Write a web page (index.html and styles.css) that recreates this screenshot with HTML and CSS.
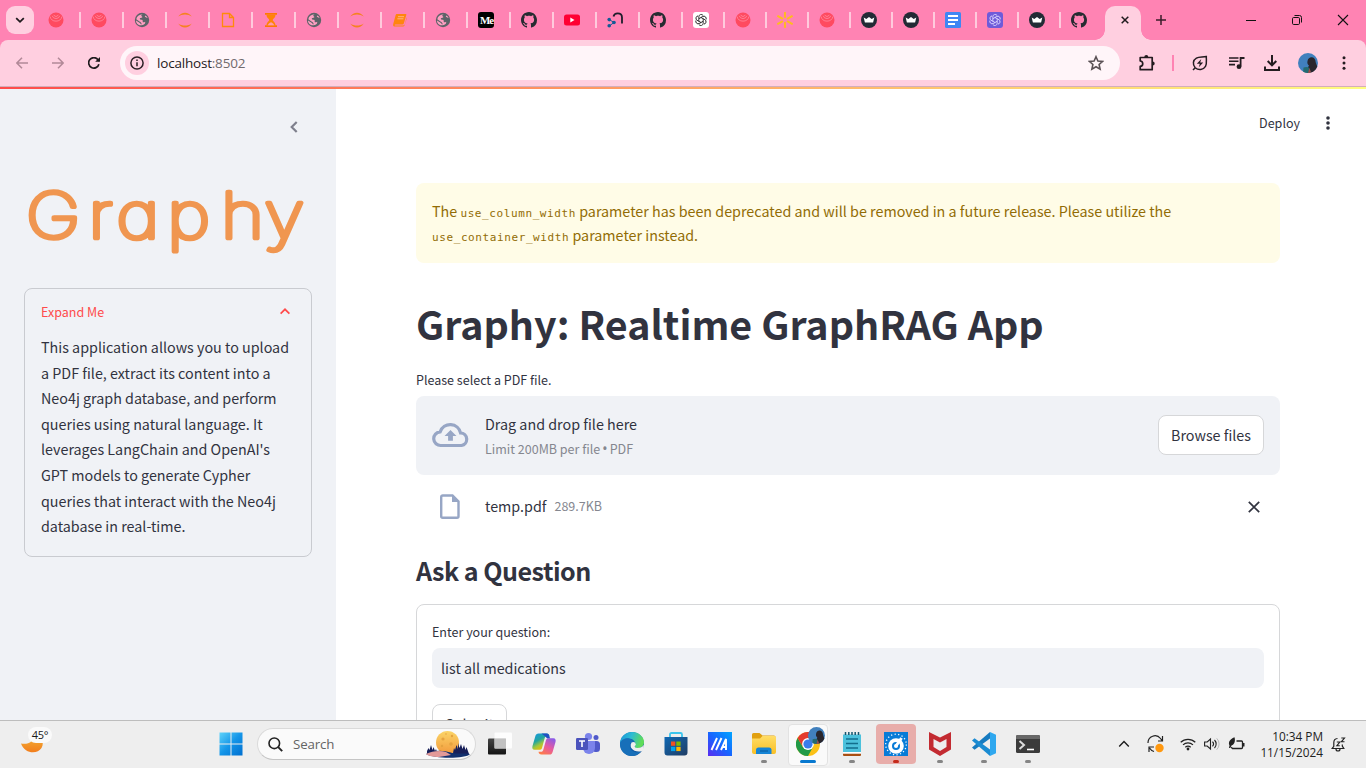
FILE: index.html
```html
<!DOCTYPE html>
<html lang="en">
<head>
<meta charset="utf-8">
<title>Graphy</title>
<link rel="stylesheet" href="styles.css">
</head>
<body>
<svg class="defs" width="0" height="0" aria-hidden="true">
  <defs>
    <linearGradient id="win" x1="0" y1="0" x2="1" y2="1"><stop offset="0" stop-color="#5fd3fa"/><stop offset=".5" stop-color="#1495e8"/><stop offset="1" stop-color="#006fd0"/></linearGradient>
    <linearGradient id="moon" x1="0" y1="0" x2="0" y2="1"><stop offset="0" stop-color="#f2b63a"/><stop offset="1" stop-color="#f27d1c"/></linearGradient>
    <linearGradient id="fullmoon" x1="0" y1="0" x2="0" y2="1"><stop offset="0" stop-color="#fbd467"/><stop offset="1" stop-color="#f29a3c"/></linearGradient>
    <linearGradient id="copA" x1="0" y1="0" x2=".6" y2="1"><stop offset="0" stop-color="#1597e8"/><stop offset=".45" stop-color="#22a5a0"/><stop offset=".7" stop-color="#a3c83a"/><stop offset="1" stop-color="#ffb800"/></linearGradient>
    <linearGradient id="copB" x1=".8" y1="0" x2=".2" y2="1"><stop offset="0" stop-color="#8a5be8"/><stop offset=".5" stop-color="#e65aa0"/><stop offset="1" stop-color="#ff7d45"/></linearGradient>
    <linearGradient id="edgeA" x1="0" y1="0" x2="1" y2=".3"><stop offset="0" stop-color="#1793d8"/><stop offset=".5" stop-color="#2dbbd4"/><stop offset="1" stop-color="#5fdc58"/></linearGradient>
    <linearGradient id="edgeB" x1="0" y1="0" x2="1" y2="1"><stop offset="0" stop-color="#1677c8"/><stop offset="1" stop-color="#0b4f96"/></linearGradient>
    <linearGradient id="asus" x1="0" y1="1" x2="1" y2="0"><stop offset="0" stop-color="#5a2cf0"/><stop offset=".5" stop-color="#1766ff"/><stop offset="1" stop-color="#00a5ff"/></linearGradient>
    <linearGradient id="store" x1="0" y1="0" x2="1" y2="1"><stop offset="0" stop-color="#0f68b4"/><stop offset="1" stop-color="#203d63"/></linearGradient>
    <linearGradient id="folder" x1="0" y1="0" x2="0" y2="1"><stop offset="0" stop-color="#ffdd67"/><stop offset="1" stop-color="#f9bf25"/></linearGradient>
    <linearGradient id="paneA" x1="0" y1="0" x2="0" y2="1"><stop offset="0" stop-color="#454545"/><stop offset="1" stop-color="#141414"/></linearGradient>
    <symbol id="swirl" viewBox="0 0 16 16"><circle cx="8" cy="8" r="7.5" fill="#ff4a60"/><g fill="none" stroke="#ff8ba2" stroke-width=".8"><path d="M2 4.500a6.200 6.200 0 0 0 12 0M4.200 3.800a4 4 0 0 0 7.600 0M5.800 2.800a2.300 2.300 0 0 0 4.400 0"/></g></symbol>
    <symbol id="globe" viewBox="0 0 16 16"><circle cx="8" cy="8" r="7.2" fill="#5d6368"/><path d="M9 2.300c-2 .6-2.200 1.700-1 2.200 1 .4-.2 1.500-1.400 1.600-1.400.1-.8 1.700.5 1.700 1.500 0 1.700.4 1.600 1.700-.1 1.400 1.400.8 2.400.2.6 1.600-.6 2.700-2.400 3.300C5.500 14.300 2 12 2 8.600l3.500 2.100c1 .5 1 1.500 2 1.800.6-1.300-.8-2.600-2-3.100L2.300 7.200C2.700 4.300 5 2.400 9 2.300zM11.500 3.500c-.9.500-.8 1.300-.1 1.600.8.300 1.200.9 2.200.8-.4-1-1.200-1.900-2.100-2.400z" fill="#ff9fc2"/></symbol>
    <symbol id="ring" viewBox="0 0 16 16"><path d="M1.200 4.600C4.500-.7 11.500-.7 14.800 4.600 11 1.900 5 1.900 1.200 4.600zM1.200 11.400C4.500 16.700 11.500 16.700 14.800 11.400 11 14.100 5 14.100 1.200 11.400z" fill="#f58220"/></symbol>
    <symbol id="page" viewBox="0 0 16 16"><path d="M2.500 1.500h7l4 4v9h-11zM9.500 1.500v4h4" fill="none" stroke="#ff8a0a" stroke-width="1.300"/></symbol>
    <symbol id="glass" viewBox="0 0 16 16"><path d="M2 1h12v1.700H2zM2 13.300h12V15H2z" fill="#ff7a00"/><path d="M3.500 2.700h9c0 3-2.500 4-2.800 5.300.3 1.300 2.800 2.300 2.800 5.300h-9C3.500 10.300 6 9.300 6.300 8 6 6.700 3.500 5.700 3.500 2.700z" fill="#ff8408"/><path d="M5 13.300c.3-2 1.500-2 3-3 1.500 1 2.700 1 3 3" fill="#ff9cae"/></symbol>
    <symbol id="book" viewBox="0 0 16 16"><path d="M5 2h8.600c.7 0 .9.400.7 1l-2.500 8.600c-.2.700-.6 1-1.300 1H3.400c-.9 0-1.100.8-.2.800h8c1 0 1.400-.4 1.700-1.300L14.800 5v1.500l-2.300 7c-.2.700-.7 1.100-1.500 1.100H3c-1.700 0-2.300-1.300-1.700-2.900L3.600 3.200C3.800 2.500 4.200 2 5 2z" fill="#ff850f"/><path d="M6 4.700h6M5.400 6.800h6" stroke="#ffb98f" stroke-width=".9"/></symbol>
    <symbol id="gh" viewBox="0 0 16 16"><path fill="#262b31" d="M8 0C3.580 0 0 3.580 0 8c0 3.540 2.290 6.530 5.470 7.590.4.070.550-.170.550-.380 0-.190-.010-.820-.010-1.490-2.010.370-2.530-.490-2.690-.940-.090-.230-.480-.940-.820-1.130-.280-.150-.680-.520-.010-.530.630-.010 1.080.580 1.230.820.720 1.210 1.870.870 2.330.660.070-.520.280-.870.510-1.070-1.780-.2-3.640-.890-3.640-3.950 0-.870.310-1.590.820-2.150-.080-.2-.360-1.020.080-2.120 0 0 .670-.210 2.200.820.640-.180 1.320-.270 2-.270s1.360.090 2 .270c1.530-1.040 2.200-.820 2.200-.820.440 1.100.160 1.920.080 2.120.510.560.820 1.270.820 2.150 0 3.070-1.870 3.750-3.650 3.950.290.250.540.730.540 1.480 0 1.070-.010 1.930-.010 2.200 0 .210.150.460.550.380A8.010 8.010 0 0 0 16 8c0-4.420-3.580-8-8-8z"/></symbol>
    <path id="petal" d="M5.500 9.400V4.300a2.700 2.700 0 0 1 4.900-1.500" fill="none" stroke="currentColor" stroke-width="1"/>
    <symbol id="knot" viewBox="0 0 16 16"><use href="#petal"/><use href="#petal" transform="rotate(60 8 8)"/><use href="#petal" transform="rotate(120 8 8)"/><use href="#petal" transform="rotate(180 8 8)"/><use href="#petal" transform="rotate(240 8 8)"/><use href="#petal" transform="rotate(300 8 8)"/></symbol>
    <symbol id="crown" viewBox="0 0 16 16"><circle cx="8" cy="8" r="8" fill="#232a35"/><path d="M2.700 5.600 5.300 7 8 5 10.700 7l2.600-1.400-1.200 4.800H3.900z" fill="#fff"/></symbol>
    <symbol id="avatar" viewBox="0 0 20 20"><circle cx="10" cy="10" r="10" fill="#4180bd"/><path d="M9.500 8c.5-3 2.500-4 4.500-3.800 2.400.3 3.700 2.400 3.700 5l1.500 4.200a10 10 0 0 1-6.200 6.100L9 16l2-3.500c-1.300-1-2-2.500-1.500-4.500z" fill="#29262d"/><path d="M5.500 14.500c2-.8 3.500-.8 5.500 0l2 5a10 10 0 0 1-7.800-.8z" fill="#246a70"/><path d="m11.500 15 1.500 4.500-3 .500z" fill="#a64945"/></symbol>
  </defs>
</svg>

<div class="screen">
  <header class="tabstrip">
    <div class="tab-search"><svg width="10" height="10" viewBox="0 0 10 10"><path d="m1.200 3.200 3.800 3.600 3.800-3.600" fill="none" stroke="#1f1a1d" stroke-width="1.800"/></svg></div>
    <div class="tab"><svg class="fav"><use href="#swirl"/></svg></div>
    <div class="tab"><svg class="fav"><use href="#swirl"/></svg></div>
    <div class="tab"><svg class="fav"><use href="#globe"/></svg></div>
    <div class="tab"><svg class="fav"><use href="#ring"/></svg></div>
    <div class="tab"><svg class="fav"><use href="#page"/></svg></div>
    <div class="tab"><svg class="fav"><use href="#glass"/></svg></div>
    <div class="tab"><svg class="fav"><use href="#globe"/></svg></div>
    <div class="tab"><svg class="fav"><use href="#ring"/></svg></div>
    <div class="tab"><svg class="fav"><use href="#book"/></svg></div>
    <div class="tab"><svg class="fav"><use href="#globe"/></svg></div>
    <div class="tab"><span class="fav medium">Me</span></div>
    <div class="tab"><svg class="fav"><use href="#gh"/></svg></div>
    <div class="tab"><svg class="fav" viewBox="0 0 16 16"><rect y="2.500" width="16" height="11" rx="2.500" fill="#ff0033"/><path d="M6.300 5.500v5L10.500 8z" fill="#fff"/></svg></div>
    <div class="tab"><svg class="fav" viewBox="0 0 16 16"><path d="M6.500 4.500C7 2.200 8.700 1.300 10.700 1.300c2.900 0 4.300 1.600 4.300 4.200v6" fill="none" stroke="#1d1d2b" stroke-width="1.800"/><path d="m2.200 7.500 4.800 3-4.800 3.500" stroke="#1b5f93" stroke-width="1" fill="none"/><circle cx="2.200" cy="7.600" r="1.800" fill="#135a96"/><circle cx="7" cy="10.500" r="1.800" fill="#135a96"/><circle cx="2.200" cy="13.800" r="1.800" fill="#135a96"/></svg></div>
    <div class="tab"><svg class="fav"><use href="#gh"/></svg></div>
    <div class="tab narrow"><span class="fav knot light"><svg width="14" height="14"><use href="#knot"/></svg></span></div>
    <div class="tab narrow"><svg class="fav"><use href="#swirl"/></svg></div>
    <div class="tab narrow"><svg class="fav" viewBox="0 0 16 16"><path d="M8 .8v4.500M8 10.700v4.500M1 4.200l4.300 2.400M10.700 9.400l4.300 2.400M1 11.800l4.300-2.400M10.700 6.600 15 4.200" stroke="#ffbd1c" stroke-width="1.900" stroke-linecap="round"/></svg></div>
    <div class="tab narrow"><svg class="fav"><use href="#swirl"/></svg></div>
    <div class="tab narrow"><svg class="fav"><use href="#crown"/></svg></div>
    <div class="tab narrow"><svg class="fav"><use href="#crown"/></svg></div>
    <div class="tab narrow"><svg class="fav" viewBox="0 0 16 16"><rect width="16" height="16" rx="1.500" fill="#4086f4"/><path d="M3 4h10M3 8h10M3 12h7" stroke="#fff" stroke-width="1.800"/></svg></div>
    <div class="tab narrow"><span class="fav knot violet"><svg width="14" height="14"><use href="#knot"/></svg></span></div>
    <div class="tab narrow"><svg class="fav"><use href="#crown"/></svg></div>
    <div class="tab narrow last"><svg class="fav"><use href="#gh"/></svg></div>
    <div class="tab-active"><svg width="8" height="8" viewBox="0 0 8 8"><path d="m.7.700 6.600 6.600M7.300.700.700 7.300" stroke="#1f1a1d" stroke-width="1.500"/></svg></div>
    <svg class="new-tab" width="10" height="10" viewBox="0 0 10 10"><path d="M5 0v10M0 5h10" stroke="#3b1c2a" stroke-width="1.500"/></svg>
    <div class="win-controls">
      <svg width="12" height="12" viewBox="0 0 12 12"><path d="M1 6.500h10" stroke="#111"/></svg>
      <svg width="12" height="12" viewBox="0 0 12 12"><g fill="none" stroke="#111"><rect x="1.500" y="3.500" width="7" height="7" rx="1.200"/><path d="M3.500 1.500h5a2 2 0 0 1 2 2v5"/></g></svg>
      <svg width="12" height="12" viewBox="0 0 12 12"><path d="m1 1 10 10M11 1 1 11" stroke="#111" stroke-width="1.100"/></svg>
    </div>
  </header>

  <nav class="toolbar">
    <div class="nav-icons">
      <svg width="12" height="12" viewBox="0 0 12 12"><path d="M12 6H1M6 .800.900 6 6 11.200" fill="none" stroke="#b28998" stroke-width="1.500"/></svg>
      <svg width="12" height="12" viewBox="0 0 12 12"><path d="M0 6h11M6 .800 11.100 6 6 11.200" fill="none" stroke="#b28998" stroke-width="1.500"/></svg>
      <svg width="12" height="12" viewBox="0 0 12 12"><path d="M10.900 7.200A5.200 5.200 0 1 1 10 2.700l1 1.200" fill="none" stroke="#1f1a1d" stroke-width="1.700"/><path d="M12 0v4.800H7.200z" fill="#1f1a1d"/></svg>
    </div>
    <div class="omnibox">
      <span class="info"><svg width="14" height="14" viewBox="0 0 14 14"><circle cx="7" cy="7" r="6.100" fill="none" stroke="#2c2025" stroke-width="1.500"/><path d="M7 6.200v4M7 3.500v1.600" stroke="#2c2025" stroke-width="1.500"/></svg></span>
      <span class="url">localhost<i>:8502</i></span>
      <svg class="star" width="16" height="16" viewBox="0 0 16 16"><path d="m8 1.700 1.900 4.300 4.700.4-3.500 3.100 1 4.600L8 11.700l-4.100 2.400 1-4.600-3.500-3.100 4.700-.4z" fill="none" stroke="#5a5155" stroke-width="1.600"/></svg>
    </div>
    <div class="actions">
      <svg class="puzzle" width="18" height="18" viewBox="0 0 18 18"><path d="M2.200 3.500h12V8.500v7.200h-12v-3.300c3.400-.4 3.400-5 0-5.400z" fill="none" stroke="#241c20" stroke-width="1.700" stroke-linejoin="round"/><path d="M6.300 3a2 2 0 0 1 4 0zM14.700 7.500a2 2 0 0 1 0 4z" fill="#241c20"/></svg>
      <span class="divider"></span>
      <svg class="leaf" width="16" height="16" viewBox="0 0 16 16"><path d="M3.200 12.700C.3 9.600 1 5 4.400 3.100 7 1.600 10 2.300 14.300 1.600c0 4.500.7 7.300-.8 9.800-2.200 3.600-7 4.200-10.300 1.300zm0 0L1 15" fill="none" stroke="#241c20" stroke-width="1.500"/><path d="M9.300 4 4.800 8.800h3l-1 3.400 4.400-4.800h-3z" fill="#241c20"/></svg>
      <svg class="queue" width="16" height="16" viewBox="0 0 16 16"><path d="M0 3h9.500M0 6.300h9.500M0 9.600h6" stroke="#241c20" stroke-width="1.600"/><path d="M11.600 11.500V3H15.500" fill="none" stroke="#241c20" stroke-width="1.800"/><circle cx="10" cy="11.700" r="2.400" fill="#241c20"/></svg>
      <svg class="download" width="16" height="16" viewBox="0 0 16 16"><path d="M8 0v10M3.700 6 8 10.300 12.300 6M1 11.500V15h14v-3.500" fill="none" stroke="#241c20" stroke-width="2"/></svg>
      <svg class="user" width="20" height="20"><use href="#avatar"/></svg>
      <svg class="menu" width="4" height="14" viewBox="0 0 4 14"><g fill="#241c20"><circle cx="2" cy="1.700" r="1.500"/><circle cx="2" cy="7" r="1.500"/><circle cx="2" cy="12.300" r="1.500"/></g></svg>
    </div>
  </nav>

  <div class="rainbow"></div>

  <div class="app">
    <aside class="sidebar">
      <svg class="collapse" width="8" height="12" viewBox="0 0 8 12"><path d="M6.700 1 1.700 6l5 5" fill="none" stroke="#7f808d" stroke-width="2.200"/></svg>
      <svg class="logo" width="288" height="80" viewBox="0 0 288 80"><text transform="scale(1.170 1)" y="54" x="1.800 55.100 79 122.500 168.300 205.300">Graphy</text></svg>
      <section class="expander">
        <div class="expander-head"><span>Expand Me</span><svg width="10" height="7" viewBox="0 0 10 7"><path d="m.6 5.700 4.400-4.400 4.400 4.400" fill="none" stroke="#ff4b4b" stroke-width="1.700"/></svg></div>
        <p>This application allows you to upload<br>a PDF file, extract its content into a<br>Neo4j graph database, and perform<br>queries using natural language. It<br>leverages LangChain and OpenAI's<br>GPT models to generate Cypher<br>queries that interact with the Neo4j<br>database in real-time.</p>
      </section>
    </aside>
    <main class="main">
      <div class="app-bar"><span>Deploy</span><svg width="6" height="14" viewBox="0 0 6 14"><g fill="#31333f"><circle cx="3" cy="2" r="1.800"/><circle cx="3" cy="7" r="1.800"/><circle cx="3" cy="12" r="1.800"/></g></svg></div>
      <div class="alert"><div>The <code>use_column_width</code> parameter has been deprecated and will be removed in a future release. Please utilize the</div><div><code>use_container_width</code> parameter instead.</div></div>
      <h1>Graphy: Realtime GraphRAG App</h1>
      <label class="caption">Please select a PDF file.</label>
      <div class="dropzone">
        <svg width="37" height="26" viewBox="0 0 37 26"><path d="M9 23.500a6.800 6.800 0 0 1-.8-13.700A10.600 10.600 0 0 1 28.600 11a6.300 6.300 0 0 1 .9 12.500z" fill="none" stroke="#97a6c5" stroke-width="3.200"/><path d="m18.500 8 6 6h-3.600v4.700h-4.800V14h-3.600z" fill="#97a6c5"/></svg>
        <div class="drop-text"><span>Drag and drop file here</span><small>Limit 200MB per file <b>•</b> PDF</small></div>
        <button class="btn browse">Browse files</button>
      </div>
      <div class="file">
        <svg width="20" height="25" viewBox="0 0 20 25"><path d="M2.700 1.500h9.800l6 6v14.800a1.500 1.500 0 0 1-1.500 1.500H2.700a1.500 1.500 0 0 1-1.500-1.500V3a1.500 1.500 0 0 1 1.500-1.500z" fill="none" stroke="#97a6c5" stroke-width="2.400"/><path d="M12 1v7h7z" fill="#97a6c5"/></svg>
        <span class="file-name">temp.pdf</span><span class="size">289.7KB</span>
        <svg class="remove" width="12" height="12" viewBox="0 0 12 12"><path d="m.8.800 10.400 10.400M11.200.800.800 11.200" stroke="#31333f" stroke-width="1.700"/></svg>
      </div>
      <h2>Ask a Question</h2>
      <form class="form">
        <label class="caption">Enter your question:</label>
        <div class="input">list all medications</div>
        <button class="btn submit" type="button">Submit</button>
      </form>
    </main>
  </div>

  <footer class="taskbar">
    <div class="weather"><svg width="24" height="24" viewBox="0 0 24 24"><path d="M1 12.500c7 1.500 13-2 14.500-9C22 5.500 24.500 12 21.500 17 17.500 23.500 5 23.300 1 12.500z" fill="url(#moon)"/></svg><span class="temp">45°</span></div>
    <div class="task start"><svg width="24" height="24" viewBox="0 0 24 24"><path d="M.5.500H11.500V11.500H.5zM12.500.500h11v11h-11zM.5 12.500h11v11H.5zM12.500 12.500h11v11h-11z" fill="url(#win)"/></svg></div>
    <div class="search">
      <svg width="15" height="15" viewBox="0 0 15 15"><circle cx="6.300" cy="6.300" r="5.300" fill="none" stroke="#222" stroke-width="1.600"/><path d="m10.200 10.200 4 4" stroke="#222" stroke-width="1.900"/></svg>
      <span>Search</span>
      <svg class="scene" width="46" height="28" viewBox="0 0 46 28"><circle cx="22.500" cy="12.500" r="11.500" fill="url(#fullmoon)"/><g fill="#e5a33f"><circle cx="18" cy="9" r="1.600"/><circle cx="27" cy="6" r="1.200"/><circle cx="26" cy="14" r="1.800"/><circle cx="17" cy="16" r="1.200"/><circle cx="21" cy="4" r=".8"/></g><path d="M2 25v-4l1.500-3 1 2 1.500-5 1.500 5 1-3 1.500 4 1-2 1 3 16 1 1-5 1 2 1.500-5 1.500 4L33 13l1.500 5 1.500-4 1.500 5 1.500-4 1.500 5 1-3 2.500 7z" fill="#171f58"/><path d="M1 24c8-4 16-4 26-1 7 1 13 0 18 1-4 5-36 5-44 0z" fill="#12306e"/><path d="M1 24c6-3 14-4 20-2l5 3-12 2c-6 0-11-1-13-3z" fill="#e39a98"/></svg>
    </div>
    <div class="tasks">
      <div class="task"><svg width="24" height="24" viewBox="0 0 24 24"><rect x="0" y="6.500" width="18" height="16" rx="1" fill="url(#paneA)"/><rect x="6.500" y=".5" width="17.500" height="16" rx="1" fill="#fff" fill-opacity=".85"/><path d="M6.500 6.500H18v10H6.500z" fill="#c1c1c1"/></svg></div>
      <div class="task"><svg width="24" height="24" viewBox="0 0 24 24"><path d="M6.500 1.500h8c2 0 2.600 1 3 2.700h-2.200c-1.700 0-2.300.9-2.700 2.300L10 16c-.5 1.500-1.400 1.800-3 1.800H2.500C.5 17.800 0 16 .5 14L3.300 4.300c.6-2 1.500-2.800 3.200-2.800z" fill="url(#copA)"/><path d="M17.500 22.500h-8c-2 0-2.600-1-3-2.700h2.200c1.700 0 2.300-.9 2.700-2.300L14 8c.5-1.500 1.400-1.800 3-1.800h4.500c2 0 2.500 1.800 2 3.800l-2.800 9.700c-.6 2-1.500 2.800-3.200 2.800z" fill="url(#copB)"/><path d="M9.500 1.500h5c2 0 2.600 1 3.500 4.700h-3l-2-2z" fill="#2151c4"/></svg></div>
      <div class="task"><svg width="24" height="24" viewBox="0 0 24 24"><circle cx="20" cy="5.500" r="2.500" fill="#5059c9"/><rect x="16" y="9" width="8" height="11" rx="3.500" fill="#5059c9"/><circle cx="12.500" cy="4.500" r="3.600" fill="#7b83eb"/><path d="M7 9h12v7a6 6 0 0 1-12 0z" fill="#7b83eb"/><rect x="0" y="6" width="12" height="12" rx="1.200" fill="#4b53bc"/><path d="M3 9h6M6 9v6" stroke="#fff" stroke-width="1.600"/></svg></div>
      <div class="task"><svg width="24" height="24" viewBox="0 0 24 24"><circle cx="12" cy="12" r="12" fill="url(#edgeB)"/><path d="M0 11C.8 4 6 0 12 0c7 0 12 5 12 10 0 4-3 6-6.500 6-3 0-3.800-1.500-2.500-2.800C17 9 10 4 4 8 2 9 .5 10 0 11z" fill="url(#edgeA)"/><path d="M0 12c.5-4 5-6.500 9-5.500 2 .5 3.700 2 4 3.300-3 .4-4 4-2.500 7 1.500 3 6 4.500 10.500 2.500-2 3-5.500 4.700-9 4.700C4.500 24 0 18 0 12z" fill="#176fb9"/><path d="M14.700 13.500c-.5 1.300.5 2.500 2.800 2.500 2.500 0 5-1 6.300-3.300v5.300c-4 3-10 1.500-12.500-2-.8-1.500-.8-3 0-4.300z" fill="#eee"/><circle cx="13.300" cy="12.300" r="2.400" fill="#eee"/></svg></div>
      <div class="task"><svg width="24" height="24" viewBox="0 0 24 24"><path d="M6 6V2.500C6 1.500 6.500 1 7.500 1h9c1 0 1.500.5 1.500 1.500V6" fill="none" stroke="#3bc5ed" stroke-width="1.800"/><path d="M.5 5h23v15.500a3 3 0 0 1-3 3h-17a3 3 0 0 1-3-3z" fill="url(#store)"/><path d="M7 9.500h4.300v4.300H7z" fill="#f25022"/><path d="M12.300 9.500h4.300v4.300h-4.300z" fill="#7fba00"/><path d="M7 14.800h4.300v4.300H7z" fill="#00a4ef"/><path d="M12.300 14.800h4.300v4.300h-4.300z" fill="#ffb900"/></svg></div>
      <div class="task"><svg width="24" height="24" viewBox="0 0 24 24"><path d="M0 0h24v24H0z" fill="url(#asus)"/><path d="m3.500 18 5.500-12M8 18l5.500-12M13 18l5-11V18M15 15h3" fill="none" stroke="#fff" stroke-width="1.900"/></svg></div>
      <div class="task run"><svg width="24" height="24" viewBox="0 0 24 24"><path d="M0 2.500A1.500 1.500 0 0 1 1.500 1h6l3 2.500H22A1.500 1.500 0 0 1 23.500 5v5H0z" fill="#e1a010"/><path d="M0 6.500h8L10.500 4H22.500A1.500 1.500 0 0 1 24 5.500V20a2 2 0 0 1-2 2H2a2 2 0 0 1-2-2z" fill="url(#folder)"/><path d="M4 22v-4a2.500 2.500 0 0 1 2.500-2.500H17A2.500 2.500 0 0 1 19.500 18v4z" fill="#1584d5"/><path d="M8 19h8" stroke="#0b5fa5" stroke-width="1.200"/></svg></div>
      <div class="task run chrome"><svg width="24" height="24" viewBox="0 0 24 24"><circle cx="12" cy="12" r="12" fill="#fbc116"/><path d="M1.600 6A12 12 0 0 1 22.400 6H12z" fill="#e33b2e"/><path d="M1.600 6 7 15.200 12 17.500V24A12 12 0 0 1 1.600 6z" fill="#229a48"/><path d="M1.600 6 12 6 7 15z" fill="#e33b2e"/><path d="m12 24 5-9-5 2.500-5-2.300z" fill="#229a48"/><circle cx="12" cy="12" r="5.900" fill="#fff"/><circle cx="12" cy="12" r="4.600" fill="#3a7cec"/></svg><svg class="profile" width="17" height="17"><use href="#avatar"/></svg></div>
      <div class="task run"><svg width="24" height="24" viewBox="0 0 24 24"><path d="M3 2.500h18v18H3z" fill="#4cc1dc"/><path d="M3 21.500h18V23a1 1 0 0 1-1 1H4a1 1 0 0 1-1-1z" fill="#a84f13"/><path d="M3 20h18v1.500H3z" fill="#fff"/><path d="M5.500 0v3M8.800 0v3M12 0v3M15.200 0v3M18.500 0v3" stroke="#15566f" stroke-width="1.500"/><path d="M6 7h12M6 11.500h12M6 16h12" stroke="#126e8d" stroke-width="1.500"/></svg></div>
      <div class="task run alerting"><svg width="24" height="24" viewBox="0 0 24 24"><path d="M0 0h24v24H0z" fill="#087bd7"/><circle cx="12" cy="12.500" r="10.300" fill="none" stroke="#fff" stroke-width="1.300" stroke-dasharray="1.200 2.400"/><circle cx="12" cy="14" r="7.800" fill="#fff"/><circle cx="12" cy="14" r="4" fill="#087bd7"/><path d="m12 14 5.500-8" stroke="#fff" stroke-width="3"/><circle cx="12" cy="14" r="2" fill="#fff"/></svg></div>
      <div class="task run"><svg width="24" height="24" viewBox="0 0 24 24"><path d="m1 0 11 5.500L23 0v17.500L12 24 1 17.500z" fill="#c32b31"/><path d="m5.500 7 6.500 3.500L18.500 7v8L12 19l-6.500-4z" fill="#eee"/></svg></div>
      <div class="task run"><svg width="24" height="24" viewBox="0 0 24 24"><path d="M18 0v24l6-2.700V2.700z" fill="#2fa8ef"/><path d="M18 0 0 15.500l2.500 2.300L18 6.500z" fill="#167bc0"/><path d="M18 24 0 8.500l2.500-2.300L18 17.500z" fill="#1a8bd2"/></svg></div>
      <div class="task run"><svg width="24" height="24" viewBox="0 0 24 24"><rect y="3" width="24" height="18" rx="1.500" fill="#3b3b3b"/><path d="M0 6V4.500A1.500 1.500 0 0 1 1.500 3h21A1.500 1.500 0 0 1 24 4.500V7H0z" fill="#686868"/><path d="m3.500 9 4.500 4-4.500 4" fill="none" stroke="#ddd" stroke-width="2"/><path d="M11 17.500h7" stroke="#fff" stroke-width="1.600"/></svg></div>
    </div>
    <div class="tray">
      <svg width="12" height="8" viewBox="0 0 12 8"><path d="m1.200 6.500 4.800-5 4.800 5" fill="none" stroke="#1d1d1d" stroke-width="1.400"/></svg>
      <svg class="sync" width="18" height="18" viewBox="0 0 18 18"><path d="M1 8a7 7 0 0 1 12.500-4.500L15 5.500M15.500 1v5H11M7 16.500a8 8 0 0 1-4.500-3.500M2 17v-5h5" fill="none" stroke="#222" stroke-width="1.200"/><circle cx="12.500" cy="13" r="4.200" fill="#ff980f"/></svg>
      <svg class="wifi" width="16" height="14" viewBox="0 0 16 14"><path d="M.7 5.300a10.500 10.500 0 0 1 14.600 0M3 7.900a7.200 7.200 0 0 1 10 0M5.300 10.300a4 4 0 0 1 5.400 0" fill="none" stroke="#222" stroke-width="1.200"/><circle cx="8" cy="12" r="1.400" fill="#222"/></svg>
      <svg class="volume" width="16" height="14" viewBox="0 0 16 14"><path d="M.6 5h2.600L6.500 2v10L3.200 9H.6z" fill="none" stroke="#222" stroke-width="1.100"/><path d="M8.500 4.700a3.300 3.300 0 0 1 0 4.600M10.500 3a5.700 5.700 0 0 1 0 8" fill="none" stroke="#222" stroke-width="1.100"/><path d="M12.700 1.300a8 8 0 0 1 0 11.400" fill="none" stroke="#bbb"/></svg>
      <svg class="battery" width="17" height="14" viewBox="0 0 17 14"><path d="M8.500 4h5a1 1 0 0 1 1 1v5.500a1 1 0 0 1-1 1H4.500L3.200 10.300" fill="none" stroke="#222" stroke-width="1.300"/><path d="M14.500 6h2v3.500h-2zM1.500 8.500C0 5.500 1.500 2.500 6.500.3c1 3.500.3 7-3 8.200L2.300 11H1z" fill="#222"/></svg>
      <div class="clock"><span>10:34 PM</span><span>11/15/2024</span></div>
      <svg class="bell" width="15" height="15" viewBox="0 0 15 15"><path d="M6.500 1.500C4 1.700 2.800 3.600 2.800 5.700v3.600L1.200 11.500h11.600L11.300 9V7.500M5 12a2 2 0 0 0 4 0" fill="none" stroke="#222" stroke-width="1.200"/><path d="M5.800 5h3L5.800 8.800h3M10.300 1h3.200l-3.200 3.800h3.200" fill="none" stroke="#222" stroke-width="1.100"/></svg>
    </div>
  </footer>
</div>
</body>
</html>
```
FILE: styles.css
```css
* { box-sizing: border-box; }
body { margin: 0; overflow: hidden; }
svg { display: block; flex: none; }
.defs { position: absolute; }

.screen {
  width: 1366px; height: 768px; overflow: hidden;
  display: flex; flex-direction: column;
  background: #fff; color: #31333f;
  font-family: "Noto Sans CJK SC", "Noto Sans", sans-serif;
  font-size: 14.320px;
}

/* browser tab strip */
.tabstrip { height: 40px; flex: none; display: flex; background: #ff83b3; position: relative; z-index: 1; }
.tab-search {
  width: 28px; height: 28px; margin: 6px 4px 0 6px; border-radius: 9px;
  background: #ffcfe0; display: flex; align-items: center; justify-content: center;
}
.tab { width: 43px; height: 16px; margin-top: 12px; padding-left: 10px; border-right: 2px solid #ffcadd; flex: none; }
.tab.narrow { width: 42px; }
.tab.last { border-right-color: transparent; }
.fav { width: 16px; height: 16px; display: block; }
.medium { background: #000; color: #fff; border-radius: 3px; font: bold 11px/16px "Liberation Serif", serif; padding-left: 2px; letter-spacing: -1.200px; }
.knot { display: flex; align-items: center; justify-content: center; border-radius: 3px; }
.knot.light { background: #fff; color: #222; }
.knot.violet { background: #6f5bd9; color: #dcd8ff; }
.tab-active {
  width: 36px; height: 34px; margin: 6px 0 0 2px; background: #ffcfe0;
  border-radius: 10px 10px 0 0; position: relative; padding: 10px 0 0 16px;
}
.tab-active::before, .tab-active::after { content: ""; position: absolute; bottom: 0; width: 10px; height: 10px; }
.tab-active::before { left: -10px; background: radial-gradient(circle at 0 0, transparent 9.500px, #ffcfe0 10px); }
.tab-active::after { right: -10px; background: radial-gradient(circle at 100% 0, transparent 9.500px, #ffcfe0 10px); }
.new-tab { margin: 15px 0 0 15px; }
.win-controls { display: flex; gap: 34px; margin: 14px 17px 0 auto; }

/* browser toolbar */
.toolbar {
  height: 47px; flex: none; display: flex; align-items: center;
  background: #ffcfe0; border-bottom: 1px solid #d3aebb;
  border-radius: 8px 8px 0 0; box-shadow: 0 -8px 0 #ff83b3;
}
.nav-icons { display: flex; gap: 24px; padding-left: 16px; width: 120px; }
.omnibox { width: 1000px; height: 34px; border-radius: 17px; background: #fff5f9; display: flex; align-items: center; padding: 0 16px 0 5px; }
.info { width: 24px; height: 24px; border-radius: 50%; background: #ffcfe0; display: flex; align-items: center; justify-content: center; }
.url { margin-left: 8px; font: 13.500px/20px "Open Sans", sans-serif; letter-spacing: -.200px; color: #1f1a1d; }
.url i { font-style: normal; color: #716a6d; }
.star { margin-left: auto; }
.actions { display: flex; align-items: center; flex: 1; }
.puzzle { margin-left: 18px; }
.divider { width: 2px; height: 16px; margin-left: 16px; background: #ff83b3; }
.leaf { margin-left: 18px; }
.queue { margin-left: 21px; }
.download { margin-left: 19px; }
.user { margin-left: 18px; }
.menu { margin-left: 24px; }

.rainbow { height: 2px; flex: none; background: linear-gradient(90deg, #ff4b4b, #fffd80); }

/* application */
.app { height: 631px; flex: none; display: flex; overflow: hidden; }
.sidebar { width: 336px; flex: none; background: #f0f2f6; padding: 32px 24px 0; display: flex; flex-direction: column; }
.collapse { align-self: flex-end; margin-right: 14px; }
.logo { margin: 51px 0 24px; flex: none; overflow: visible; }
.logo text {
  font-family: Inter, sans-serif; font-size: 63px; font-weight: 100; font-feature-settings: "cv11";
  fill: #f09650; stroke: #f09650; stroke-width: 4.600px; stroke-linejoin: round;
}
.expander { border: 1px solid #c9cbd0; border-radius: 8px; height: 269px; padding: 0 16px; }
.expander-head { height: 45px; display: flex; align-items: center; justify-content: space-between; padding-right: 5px; color: #ff4b4b; font-size: 12.530px; }
.expander p { margin: 0; line-height: 25.600px; white-space: nowrap; }

.main { flex: 1; padding: 0 86px 0 80px; }
.app-bar { height: 94px; display: flex; justify-content: flex-end; align-items: flex-start; padding-top: 24px; margin-right: -51px; font-size: 12.530px; line-height: 20px; gap: 25px; }
.app-bar svg { margin-top: 3px; }
.alert { height: 80px; border-radius: 8px; padding: 16px; background: #fffce7; color: #926c05; line-height: 24px; white-space: nowrap; }
.alert div { height: 24px; }
.alert code { font-family: "DejaVu Sans Mono", monospace; font-size: 11px; line-height: 1; letter-spacing: .600px; }
h1 { margin: 33px 0 0; height: 53px; line-height: 53px; font-size: 39.400px; font-weight: 700; white-space: nowrap; }
.caption { display: block; font-size: 12.530px; line-height: 20px; }
h1 + .caption { margin: 21px 0 6px; }
.dropzone { height: 79px; border-radius: 8px; background: #f0f2f6; padding: 0 16px 1px; display: flex; align-items: center; }
.drop-text { margin-left: 16px; display: flex; flex-direction: column; line-height: 24px; padding-top: 3px; }
.drop-text small { font-size: 12.530px; line-height: 25px; color: #85878f; white-space: nowrap; }
.drop-text b { font-family: "Noto Sans", sans-serif; font-size: 14px; font-weight: 400; margin: 0 -.700px; line-height: 1; }
.btn { font: inherit; color: inherit; height: 40px; border: 1px solid #d6d7d9; border-radius: 8px; background: #fff; padding: 0; }
.browse { width: 106px; margin-left: auto; padding-bottom: 2px; }
.file { height: 63px; display: flex; align-items: center; padding: 0 20px 0 24px; }
.file-name { margin: -3px 0 0 25px; }
.size { margin: -2px 0 0 8px; font-size: 12.530px; color: #85878f; }
.remove { margin-left: auto; }
h2 { margin: 15px 0 17px; height: 34px; line-height: 34px; font-size: 25.070px; font-weight: 600; letter-spacing: -.500px; }
.form { border: 1px solid #d6d7d9; border-radius: 8px; padding: 17px 15px; height: 200px; }
.input { height: 40px; margin: 6px 0 16px; border-radius: 8px; background: #f0f2f6; padding: 0 9px; line-height: 40px; }
.submit { width: 75px; display: block; padding-bottom: 2px; }

/* taskbar */
.taskbar { height: 48px; flex: none; display: flex; align-items: center; background: #eee; border-top: 1px solid #bdbdbd; padding-bottom: 1px; font-family: "Open Sans", sans-serif; }
.weather { width: 209px; height: 46px; padding: 10px 0 0 20px; position: relative; }
.temp { position: absolute; left: 28px; top: 6px; width: 24px; height: 16px; border-radius: 8px; background: #fafafa; font-size: 11px; line-height: 16px; text-align: center; color: #1a1a1a; letter-spacing: -.300px; }
.task { width: 44px; height: 46px; flex: none; display: flex; align-items: center; justify-content: center; position: relative; }
.search { width: 219px; height: 32px; margin: 0 2px 0 4px; border: 1px solid #dadada; border-bottom-color: #c5c5c5; border-radius: 16px; background: #fafafa; display: flex; align-items: center; padding: 0 4px 0 10px; font-size: 13.300px; letter-spacing: -.150px; color: #646464; }
.search span { margin-left: 10px; }
.scene { margin-left: auto; }
.tasks { display: flex; }
.run::after { content: ""; position: absolute; bottom: 4px; left: 19px; width: 6px; height: 3px; border-radius: 2px; background: #858585; }
.chrome::before, .alerting::before { content: ""; position: absolute; left: 2px; top: 3px; width: 40px; height: 40px; border-radius: 4px; }
.chrome::before { width: 38px; background: #fafafa; border: 1px solid #e2e2e2; box-shadow: 2px 0 0 #f4f4f4; }
.alerting::before { background: #e8adaa; }
.task > svg { position: relative; }
.chrome::after { width: 16px; left: 14px; background: #0879d0; }
.alerting::after { background: #c42b1c; }
.chrome .profile { position: absolute; left: 22px; top: 6px; }
.tray { margin-left: 68px; display: flex; align-items: center; flex: 1; }
.sync { margin-left: 17px; }
.wifi { margin-left: 15px; }
.volume { margin-left: 8px; }
.battery { margin-left: 8px; }
.clock { margin-left: auto; display: flex; flex-direction: column; align-items: flex-end; font-size: 11.800px; line-height: 16px; color: #222; }
.bell { margin: 0 20px 0 8px; }
```
